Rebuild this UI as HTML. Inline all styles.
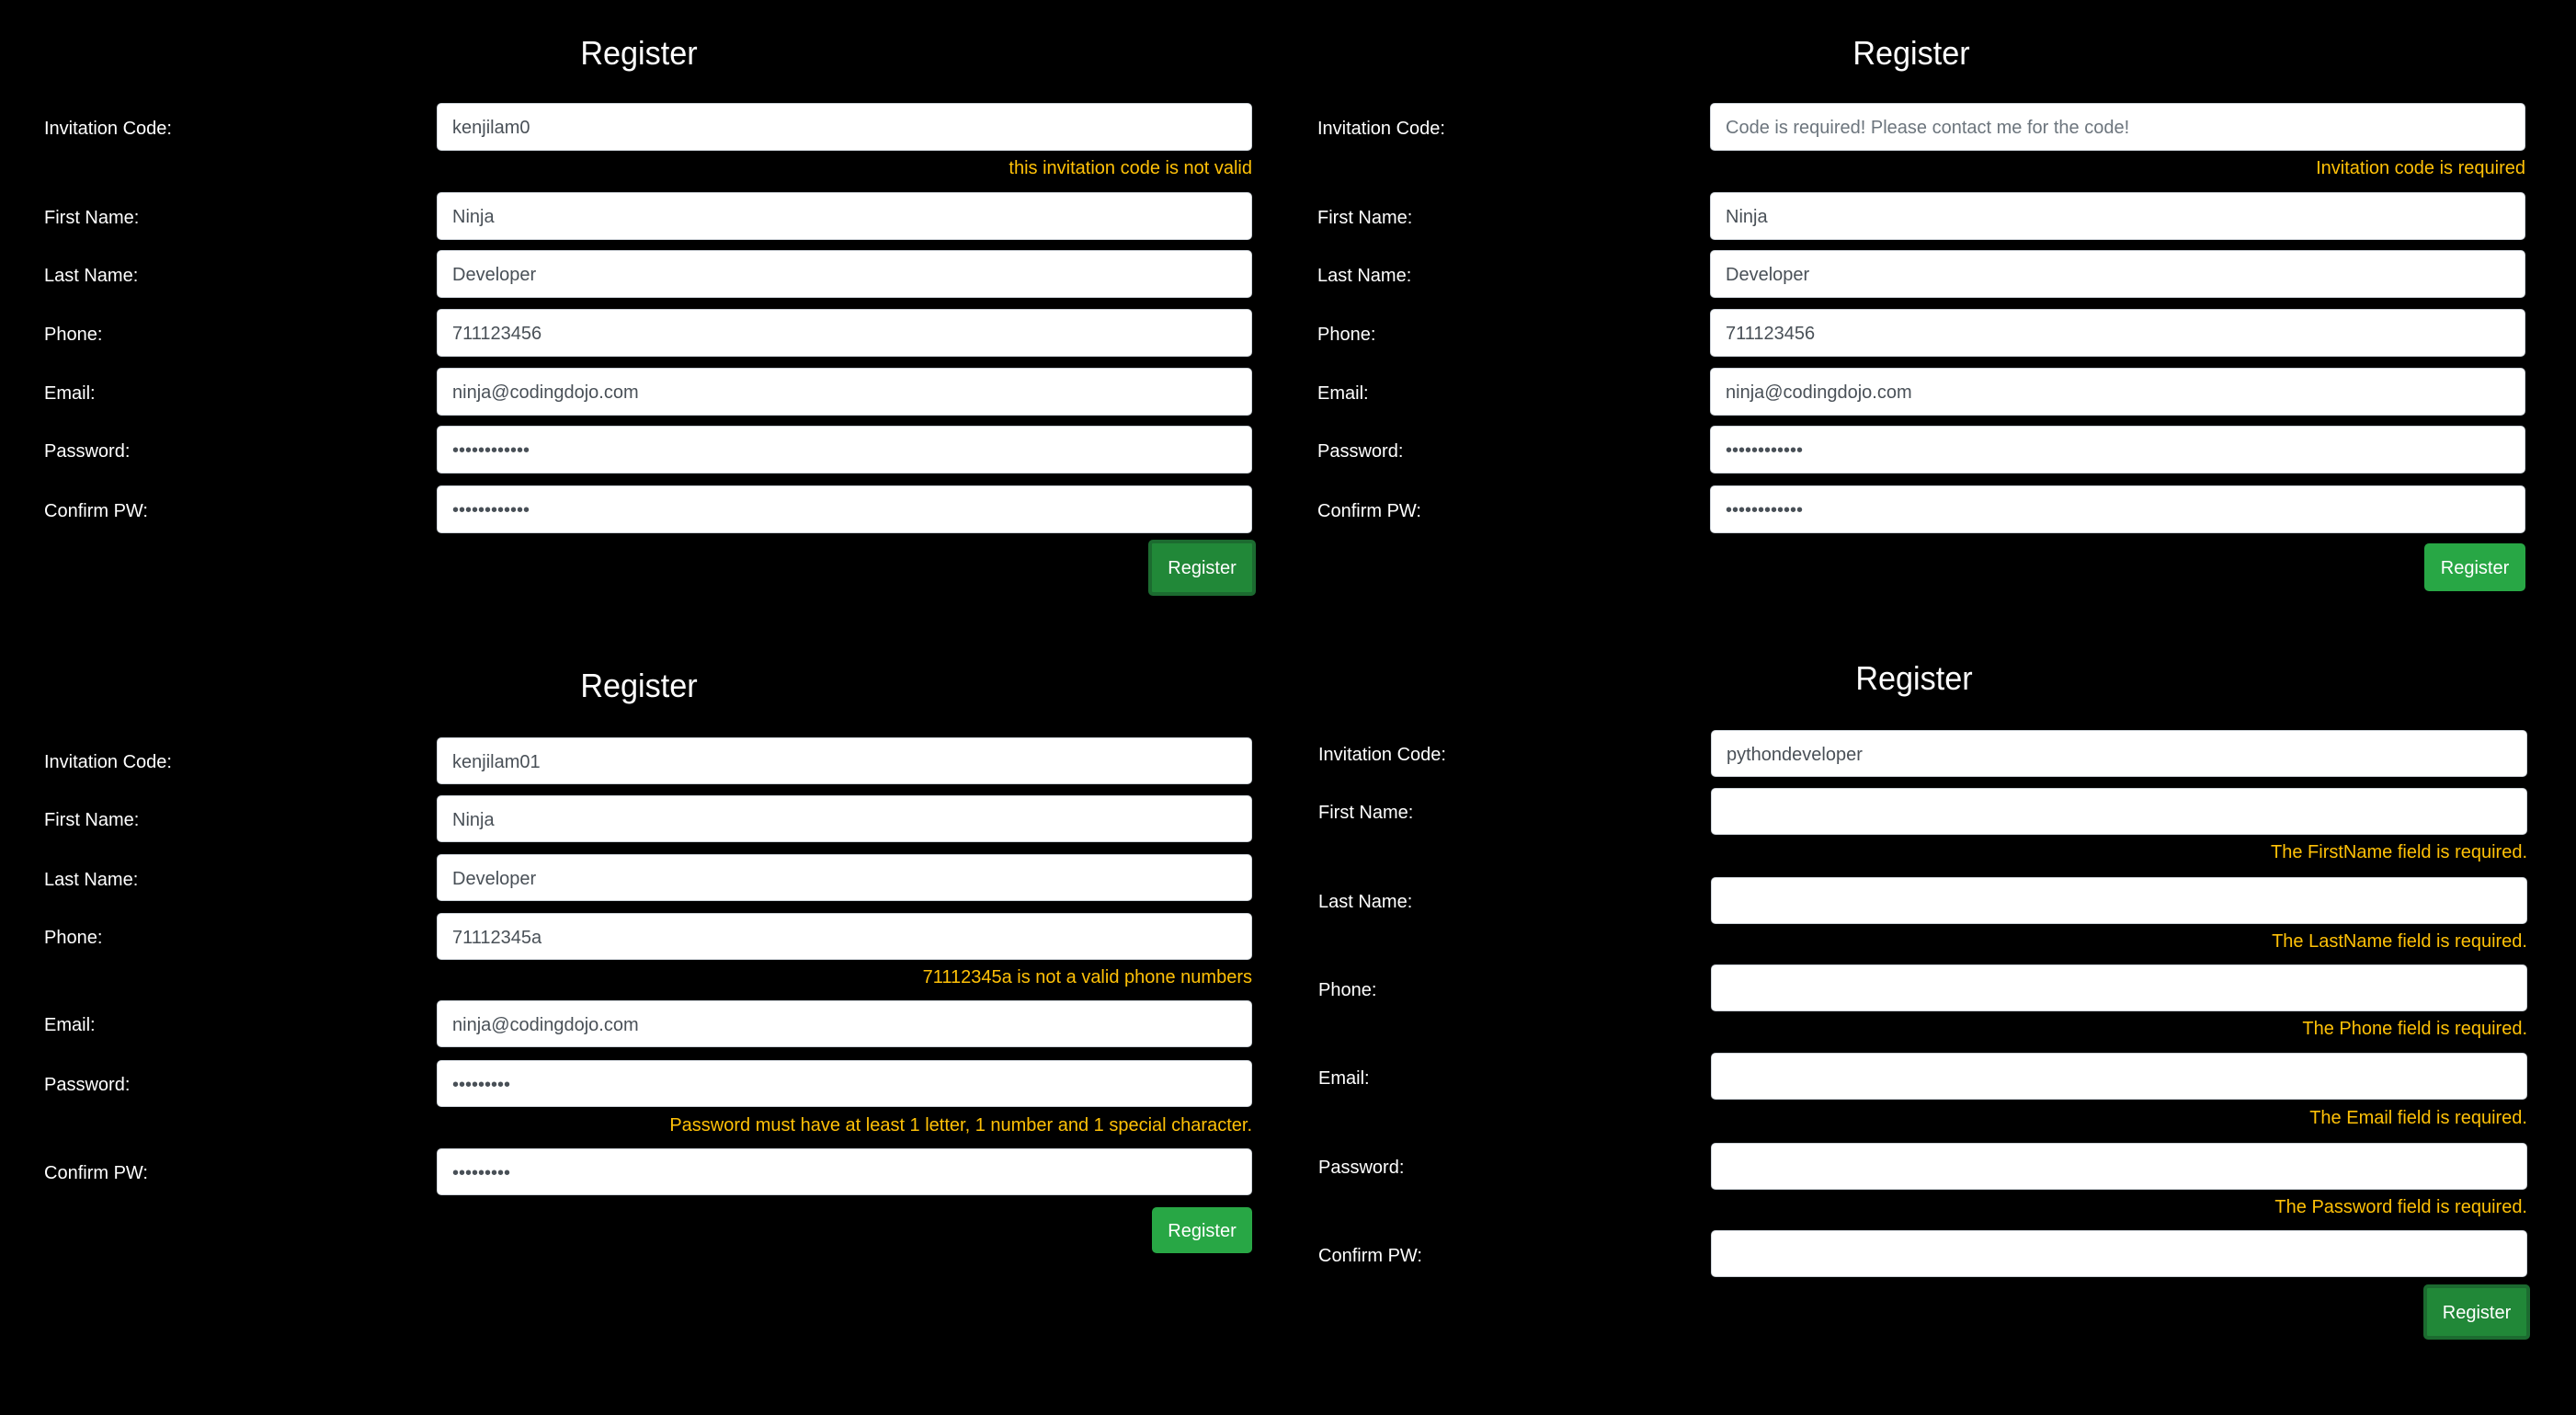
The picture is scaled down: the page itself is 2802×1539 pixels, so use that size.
<!DOCTYPE html>
<html><head><meta charset="utf-8"><style>
*{box-sizing:border-box;margin:0;padding:0}
body{width:2802px;height:1539px;background:#000;position:relative;overflow:hidden;font-family:"Liberation Sans",sans-serif}
.t{position:absolute;color:#fff;font-size:36px;transform:translateX(-50%) scaleX(0.95);line-height:1;margin-top:2px}
.l{position:absolute;color:#fff;font-size:20px;line-height:1;transform:translateY(-50%);margin-top:2px}
.i{position:absolute;background:#fff;border:1px solid #ced4da;border-radius:5px;color:#495057;font-size:20px;padding-left:16px;padding-top:3px;display:flex;align-items:center}
.p{color:#6c757d}
.e{position:absolute;color:#ffc107;font-size:20px;line-height:1;transform:translateY(-50%);text-align:right;margin-top:1px}
.b{position:absolute;background:#28a745;color:#fff;font-size:20px;border-radius:5px;display:flex;align-items:center;justify-content:center;padding-top:2px}
.f{background:#218838;border:4px solid #1c6b30}
</style></head><body>
<!-- top-left -->
<div class="t" style="left:695px;top:38px">Register</div>
<div class="l" style="left:48px;top:138px">Invitation Code:</div>
<div class="i" style="left:475px;top:112px;width:887px;height:52px">kenjilam0</div>
<div class="e" style="right:1440px;top:182px">this invitation code is not valid</div>
<div class="l" style="left:48px;top:235px">First Name:</div>
<div class="i" style="left:475px;top:209px;width:887px;height:52px">Ninja</div>
<div class="l" style="left:48px;top:298px">Last Name:</div>
<div class="i" style="left:475px;top:272px;width:887px;height:52px">Developer</div>
<div class="l" style="left:48px;top:362px">Phone:</div>
<div class="i" style="left:475px;top:336px;width:887px;height:52px">711123456</div>
<div class="l" style="left:48px;top:426px">Email:</div>
<div class="i" style="left:475px;top:400px;width:887px;height:52px">ninja@codingdojo.com</div>
<div class="l" style="left:48px;top:489px">Password:</div>
<div class="i" style="left:475px;top:463px;width:887px;height:52px">••••••••••••</div>
<div class="l" style="left:48px;top:554px">Confirm PW:</div>
<div class="i" style="left:475px;top:528px;width:887px;height:52px">••••••••••••</div>
<div class="b f" style="left:1249px;top:587px;width:117px;height:61px">Register</div>

<!-- top-right -->
<div class="t" style="left:2079px;top:38px">Register</div>
<div class="l" style="left:1433px;top:138px">Invitation Code:</div>
<div class="i p" style="left:1860px;top:112px;width:887px;height:52px">Code is required! Please contact me for the code!</div>
<div class="e" style="right:55px;top:182px">Invitation code is required</div>
<div class="l" style="left:1433px;top:235px">First Name:</div>
<div class="i" style="left:1860px;top:209px;width:887px;height:52px">Ninja</div>
<div class="l" style="left:1433px;top:298px">Last Name:</div>
<div class="i" style="left:1860px;top:272px;width:887px;height:52px">Developer</div>
<div class="l" style="left:1433px;top:362px">Phone:</div>
<div class="i" style="left:1860px;top:336px;width:887px;height:52px">711123456</div>
<div class="l" style="left:1433px;top:426px">Email:</div>
<div class="i" style="left:1860px;top:400px;width:887px;height:52px">ninja@codingdojo.com</div>
<div class="l" style="left:1433px;top:489px">Password:</div>
<div class="i" style="left:1860px;top:463px;width:887px;height:52px">••••••••••••</div>
<div class="l" style="left:1433px;top:554px">Confirm PW:</div>
<div class="i" style="left:1860px;top:528px;width:887px;height:52px">••••••••••••</div>
<div class="b" style="left:2637px;top:591px;width:110px;height:52px">Register</div>

<!-- bottom-left -->
<div class="t" style="left:695px;top:726px">Register</div>
<div class="l" style="left:48px;top:827px">Invitation Code:</div>
<div class="i" style="left:475px;top:802px;width:887px;height:51px">kenjilam01</div>
<div class="l" style="left:48px;top:890px">First Name:</div>
<div class="i" style="left:475px;top:865px;width:887px;height:51px">Ninja</div>
<div class="l" style="left:48px;top:955px">Last Name:</div>
<div class="i" style="left:475px;top:929px;width:887px;height:51px">Developer</div>
<div class="l" style="left:48px;top:1018px">Phone:</div>
<div class="i" style="left:475px;top:993px;width:887px;height:51px">71112345a</div>
<div class="e" style="right:1440px;top:1062px">71112345a is not a valid phone numbers</div>
<div class="l" style="left:48px;top:1113px">Email:</div>
<div class="i" style="left:475px;top:1088px;width:887px;height:51px">ninja@codingdojo.com</div>
<div class="l" style="left:48px;top:1178px">Password:</div>
<div class="i" style="left:475px;top:1153px;width:887px;height:51px">•••••••••</div>
<div class="e" style="right:1440px;top:1223px">Password must have at least 1 letter, 1 number and 1 special character.</div>
<div class="l" style="left:48px;top:1274px">Confirm PW:</div>
<div class="i" style="left:475px;top:1249px;width:887px;height:51px">•••••••••</div>
<div class="b" style="left:1253px;top:1313px;width:109px;height:50px">Register</div>

<!-- bottom-right -->
<div class="t" style="left:2082px;top:718px">Register</div>
<div class="l" style="left:1434px;top:819px">Invitation Code:</div>
<div class="i" style="left:1861px;top:794px;width:888px;height:51px">pythondeveloper</div>
<div class="l" style="left:1434px;top:882px">First Name:</div>
<div class="i" style="left:1861px;top:857px;width:888px;height:51px"></div>
<div class="e" style="right:53px;top:926px">The FirstName field is required.</div>
<div class="l" style="left:1434px;top:979px">Last Name:</div>
<div class="i" style="left:1861px;top:954px;width:888px;height:51px"></div>
<div class="e" style="right:53px;top:1023px">The LastName field is required.</div>
<div class="l" style="left:1434px;top:1075px">Phone:</div>
<div class="i" style="left:1861px;top:1049px;width:888px;height:51px"></div>
<div class="e" style="right:53px;top:1118px">The Phone field is required.</div>
<div class="l" style="left:1434px;top:1171px">Email:</div>
<div class="i" style="left:1861px;top:1145px;width:888px;height:51px"></div>
<div class="e" style="right:53px;top:1215px">The Email field is required.</div>
<div class="l" style="left:1434px;top:1268px">Password:</div>
<div class="i" style="left:1861px;top:1243px;width:888px;height:51px"></div>
<div class="e" style="right:53px;top:1312px">The Password field is required.</div>
<div class="l" style="left:1434px;top:1364px">Confirm PW:</div>
<div class="i" style="left:1861px;top:1338px;width:888px;height:51px"></div>
<div class="b f" style="left:2636px;top:1397px;width:116px;height:60px">Register</div>
</body></html>
